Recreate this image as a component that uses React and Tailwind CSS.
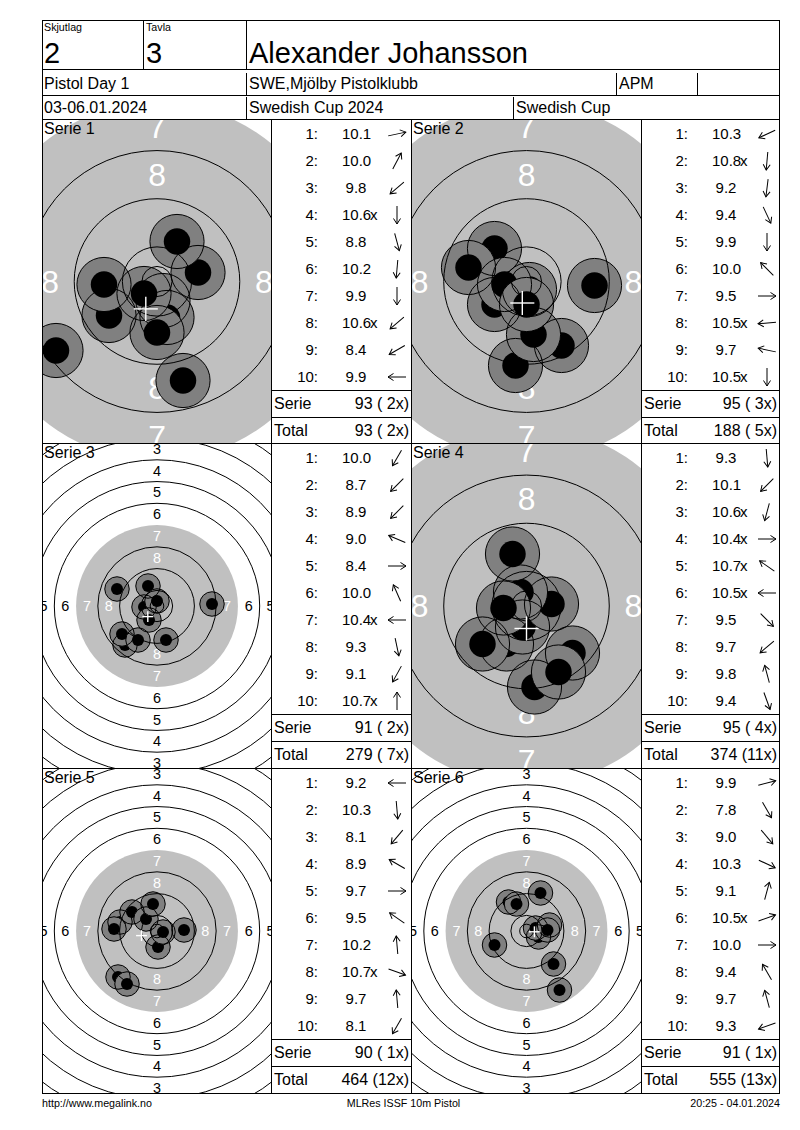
import React from "react";

// ring radii in mm (1..6, 8, 9, 10, inner ten); the 7 ring is the grey disc
const RINGS = [77.75, 69.75, 61.75, 53.75, 45.75, 37.75, 21.75, 13.75, 5.75, 2.5];
const NUMS = [
  [1, 73.75], [2, 65.75], [3, 57.75], [4, 49.75],
  [5, 41.75], [6, 33.75], [7, 25.75], [8, 17.75],
];

const series = [
  {
    n: 1, zoom: true,
    shots: [[41, -9], [20, -40], [-48, 34], [6, 19], [26, 99], [10, 36], [0, 51], [-13, 12], [-101, 69], [-53, 3]],
    scores: ["10.1", "10.0", "9.8", "10.6x", "8.8", "10.2", "9.9", "10.6x", "8.4", "9.9"],
    arrows: [-12, -62, 140, 90, 75, 95, 90, 140, 150, 180],
    serie: "93 ( 2x)", total: "93 ( 2x)",
  },
  {
    n: 2, zoom: true,
    shots: [[-32, 23], [3, 8], [-11, 84], [35, 64], [7, 53], [-32, -33], [68, 4], [-22, 3], [-58, -14], [0, 23]],
    scores: ["10.3", "10.8x", "9.2", "9.4", "9.9", "10.0", "9.5", "10.5x", "9.7", "10.5x"],
    arrows: [155, 95, 97, 65, 90, 225, 0, 175, 192, 90],
    serie: "95 ( 3x)", total: "188 ( 5x)",
  },
  {
    n: 3, zoom: false,
    shots: [[-40, -17], [-32, 39], [-35, 28], [55, -2], [-9, -20], [-13, 1], [0, -5], [9, 34], [-19, 34], [-8, 14]],
    scores: ["10.0", "8.7", "8.9", "9.0", "8.4", "10.0", "10.4x", "9.3", "9.1", "10.7x"],
    arrows: [120, 135, 135, 203, 0, 246, 180, 78, 119, 270],
    serie: "91 ( 2x)", total: "279 ( 7x)",
  },
  {
    n: 4, zoom: true,
    shots: [[8, 81], [-20, 38], [-4, 21], [25, -2], [-6, -14], [-23, 2], [46, 47], [-44, 38], [-14, -52], [32, 66]],
    scores: ["9.3", "10.1", "10.6x", "10.4x", "10.7x", "10.5x", "9.5", "9.7", "9.8", "9.4"],
    arrows: [85, 135, 105, 0, 215, 180, 45, 140, 255, 70],
    serie: "95 ( 4x)", total: "374 (11x)",
  },
  {
    n: 5, zoom: false,
    shots: [[-37, -9], [1, 16], [-39, 46], [-43, -2], [27, -1], [-25, -19], [-11, -12], [6, 1], [-4, -27], [-30, 53]],
    scores: ["9.2", "10.3", "8.1", "8.9", "9.7", "9.5", "10.2", "10.7x", "9.7", "8.1"],
    arrows: [180, 85, 130, 210, 0, 215, 265, 20, 265, 120],
    serie: "90 ( 1x)", total: "464 (12x)",
  },
  {
    n: 6, zoom: false,
    shots: [[23, -6], [33, 59], [27, 33], [12, 6], [14, -38], [9, -3], [21, -1], [-18, -29], [-10, -27], [-32, 14]],
    scores: ["9.9", "7.8", "9.0", "10.3", "9.1", "10.5x", "10.0", "9.4", "9.7", "9.3"],
    arrows: [-15, 60, 50, 25, -75, -20, 0, 240, 255, 160],
    serie: "91 ( 1x)", total: "555 (13x)",
  },
];

function Target({ n, zoom, shots }) {
  const s = zoom ? 6.02 : 2.72;
  const ro = 4.5 * s;
  const ri = 2.2 * s;
  const mx = shots.reduce((a, p) => a + p[0], 0) / shots.length;
  const my = shots.reduce((a, p) => a + p[1], 0) / shots.length;
  const c = 2 * s;
  return (
    <div className="relative h-full overflow-hidden">
      <svg className="block w-full h-full">
        <svg x="50%" y="50%" overflow="visible">
          <circle r={29.75 * s} fill="#c0c0c0" />
          {NUMS.map(([v, r]) =>
            [[0, -r], [0, r], [-r, 0], [r, 0]].map(([x, y], i) => (
              <text
                key={v + "-" + i}
                x={x * s}
                y={y * s}
                textAnchor="middle"
                dominantBaseline="central"
                fontSize={5.3 * s}
                fill={v >= 7 ? "#ffffff" : "#000000"}
                fontFamily="'Liberation Sans', Arial, sans-serif"
              >
                {v}
              </text>
            ))
          )}
          {shots.map(([x, y], i) => (
            <g key={"s" + i}>
              <circle cx={x} cy={y} r={ro} fill="#808080" />
              <circle cx={x} cy={y} r={ri} fill="#000000" />
            </g>
          ))}
          {shots.map(([x, y], i) => (
            <circle key={"o" + i} cx={x} cy={y} r={ro} fill="none" stroke="#000" strokeWidth="1" />
          ))}
          {RINGS.map((r) => (
            <circle key={r} r={r * s} fill="none" stroke="#000" strokeWidth="1" />
          ))}
          <g stroke="#fff" strokeWidth="1.4">
            <line x1={mx - c} y1={my} x2={mx + c} y2={my} />
            <line x1={mx} y1={my - c} x2={mx} y2={my + c} />
          </g>
        </svg>
      </svg>
      <span className="absolute left-[1px] top-0 text-[16px] leading-[18px]">Serie {n}</span>
    </div>
  );
}

function Arrow({ a }) {
  return (
    <svg className="ml-[6px] w-[22px] h-[20px] shrink-0" viewBox="-11 -10 22 20">
      <g transform={`rotate(${a})`} fill="none" stroke="#000" strokeWidth="1">
        <line x1="-9" y1="0" x2="9" y2="0" />
        <polyline points="3.5,-3.5 9,0 3.5,3.5" />
      </g>
    </svg>
  );
}

function Scores({ scores, arrows, serie, total }) {
  return (
    <div className="flex flex-col h-full border-l border-black">
      {scores.map((sc, i) => {
        const x = sc.endsWith("x");
        const v = x ? sc.slice(0, -1) : sc;
        return (
          <div key={i} className="h-[27px] flex items-center text-[15px] leading-none">
            <span className="w-[46px] text-right">{i + 1}:</span>
            <span className="ml-[24px] w-[28px] text-center">{v}</span>
            <span className="w-[10px]">{x ? "x" : ""}</span>
            <Arrow a={arrows[i]} />
          </div>
        );
      })}
      <div className="h-[27px] border-t border-black flex items-center justify-between px-[2px] text-[16px]">
        <span>Serie</span>
        <span className="whitespace-pre">{serie}</span>
      </div>
      <div className="flex-1 border-t border-black flex items-center justify-between px-[2px] text-[16px]">
        <span>Total</span>
        <span className="whitespace-pre">{total}</span>
      </div>
    </div>
  );
}

function SerieRow({ left, right, className }) {
  return (
    <div className={"grid grid-cols-[228px_140px_230px_138px] " + className}>
      <Target {...left} />
      <Scores {...left} />
      <div className="border-l border-black h-full">
        <Target {...right} />
      </div>
      <Scores {...right} />
    </div>
  );
}

export default function App() {
  return (
    <div className="w-[800px] h-[1130px] bg-white text-black font-['Liberation_Sans',Arial,sans-serif] pt-[20px]">
      <div className="ml-[42px] w-[738px] border border-black">
        <div className="flex h-[49px] border-b border-black">
          <div className="w-[101px] border-r border-black pl-[1px]">
            <div className="text-[10.7px] leading-[12px]">Skjutlag</div>
            <div className="text-[29px] leading-[30px] mt-[5px]">2</div>
          </div>
          <div className="w-[103px] border-r border-black pl-[2px]">
            <div className="text-[10.7px] leading-[12px]">Tavla</div>
            <div className="text-[29px] leading-[30px] mt-[5px]">3</div>
          </div>
          <div className="flex-1 pl-[2px] pt-[17px] text-[29px] leading-[30px]">Alexander Johansson</div>
        </div>
        <div className="flex h-[26px] border-b border-black text-[16px] leading-[22px] pt-[3px]">
          <div className="w-[204px] border-r border-black pl-[1px]">Pistol Day 1</div>
          <div className="w-[370px] border-r border-black pl-[2px]">SWE,Mjölby Pistolklubb</div>
          <div className="w-[81px] border-r border-black pl-[2px]">APM</div>
          <div className="flex-1"></div>
        </div>
        <div className="flex h-[24px] border-b border-black text-[16px] leading-[22px] pt-[1px]">
          <div className="w-[204px] border-r border-black pl-[1px]">03-06.01.2024</div>
          <div className="w-[267px] border-r border-black pl-[2px]">Swedish Cup 2024</div>
          <div className="flex-1 pl-[2px]">Swedish Cup</div>
        </div>
        <SerieRow left={series[0]} right={series[1]} className="h-[324px] border-b border-black" />
        <SerieRow left={series[2]} right={series[3]} className="h-[325px] border-b border-black" />
        <SerieRow left={series[4]} right={series[5]} className="h-[324px]" />
      </div>
      <div className="ml-[42px] w-[738px] grid grid-cols-3 text-[10.7px] leading-[13px] mt-[3px]">
        <span>http://www.megalink.no</span>
        <span className="text-center pr-[15px]">MLRes ISSF 10m Pistol</span>
        <span className="text-right">20:25 - 04.01.2024</span>
      </div>
    </div>
  );
}
